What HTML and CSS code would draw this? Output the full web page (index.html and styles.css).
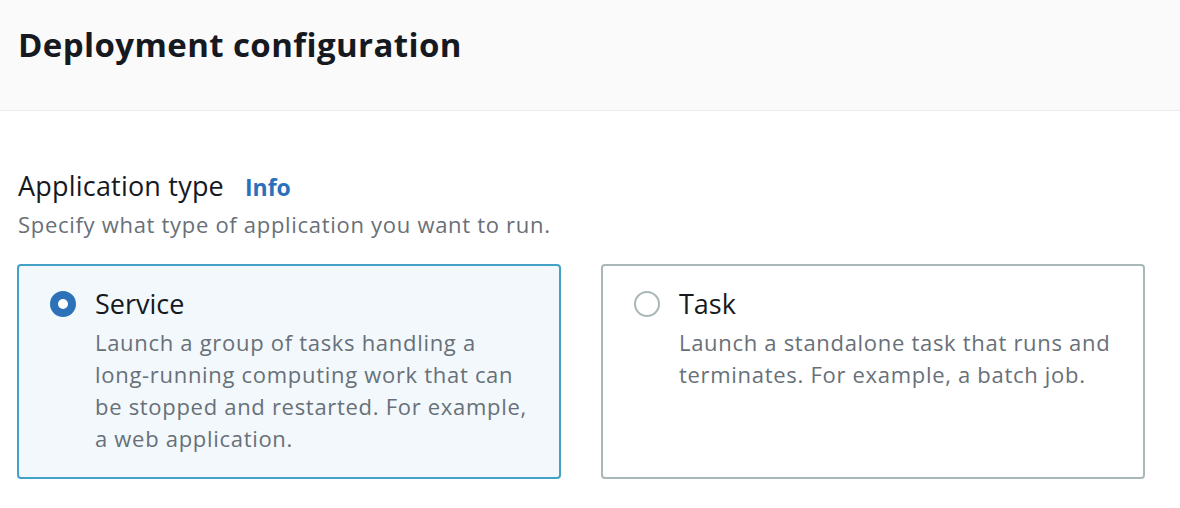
FILE: index.html
```html
<!DOCTYPE html>
<html>
<head>
<meta charset="utf-8">
<link rel="stylesheet" href="styles.css">
</head>
<body>
<div class="panel">
  <header class="panel-header">
    <h2 class="panel-title">Deployment configuration</h2>
  </header>
  <section class="panel-body">
    <div class="field-label">
      <span class="label-text">Application type</span>
      <a class="info-link">Info</a>
    </div>
    <p class="field-desc">Specify what type of application you want to run.</p>
    <div class="tiles">
      <div class="tile tile-selected">
        <span class="radio radio-checked"></span>
        <div class="tile-content">
          <div class="tile-title">Service</div>
          <div class="tile-desc">Launch a group of tasks handling a long-running computing work that can be stopped and restarted. For example, a web application.</div>
        </div>
      </div>
      <div class="tile">
        <span class="radio"></span>
        <div class="tile-content">
          <div class="tile-title">Task</div>
          <div class="tile-desc">Launch a standalone task that runs and terminates. For example, a batch job.</div>
        </div>
      </div>
    </div>
  </section>
</div>
</body>
</html>
```
FILE: styles.css
```css
* { box-sizing: border-box; }
html, body { margin: 0; padding: 0; background: #ffffff; }
body { font-family: "Open Sans", "Noto Sans", sans-serif; color: #16191f; }

.panel-header {
  background: #fafafa;
  height: 111px;
  border-bottom: 1px solid #eaeded;
  padding: 21px 18px 0;
}
.panel-title {
  margin: 0;
  font-size: 33px;
  letter-spacing: 0.4px;
  font-weight: 700;
  line-height: 48px;
  color: #16191f;
}

.panel-body {
  padding: 59px 17px 0;
}
.field-label {
  display: flex;
  align-items: baseline;
  gap: 21px;
  padding-left: 1px;
  line-height: 32px;
}
.label-text { font-size: 27px; letter-spacing: 0.2px; color: #16191f; }
.info-link { font-size: 23px; font-weight: 700; color: #2a70ba; }
.field-desc {
  margin: 5px 0 0;
  padding-left: 1px;
  font-size: 22px;
  letter-spacing: 0.7px;
  line-height: 32px;
  color: #687078;
}

.tiles {
  display: flex;
  gap: 40px;
  margin-top: 24px;
  width: 1128px;
}
.tile {
  flex: 1;
  height: 215px;
  border: 2px solid #aab7b8;
  border-radius: 4px;
  background: #ffffff;
  display: flex;
  padding: 25px 24px 0 31px;
  gap: 19px;
}
.tile-selected {
  border-color: #44a2c8;
  background: #f2f8fc;
}
.radio {
  flex: none;
  width: 26px;
  height: 26px;
  border-radius: 50%;
  border: 2px solid #aab7b8;
  background: #ffffff;
}
.radio-checked {
  border: 8px solid #2d72b8;
  background: #ffffff;
}
.tile-content { padding-top: 0; }
.tile-title { font-size: 27px; line-height: 26px; color: #16191f; }
.tile-desc {
  margin-top: 9px;
  font-size: 22px;
  letter-spacing: 0.7px;
  line-height: 32px;
  color: #687078;
}
```
